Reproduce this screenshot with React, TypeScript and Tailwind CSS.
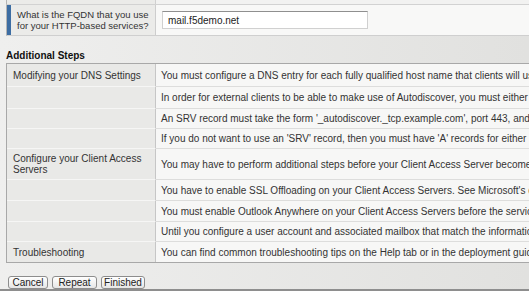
import React from 'react';

// rows of the "Additional Steps" table; text runs past the right edge and gets clipped
const STEPS = [
  { label: 'Modifying your DNS Settings', text: 'You must configure a DNS entry for each fully qualified host name that clients will use to access the service.', h: 'h-[22px]' },
  { label: '', text: 'In order for external clients to be able to make use of Autodiscover, you must either create an SRV record or an A record.', h: 'h-[22px]' },
  { label: '', text: "An SRV record must take the form '_autodiscover._tcp.example.com', port 443, and must point to the virtual server.", h: 'h-[20px]' },
  { label: '', text: "If you do not want to use an 'SRV' record, then you must have 'A' records for either 'autodiscover.example.com'.", h: 'h-[20px]' },
  { label: 'Configure your Client Access Servers', text: 'You may have to perform additional steps before your Client Access Server become available to clients.', h: 'h-[31px]' },
  { label: '', text: "You have to enable SSL Offloading on your Client Access Servers. See Microsoft's documentation for details.", h: 'h-[21px]' },
  { label: '', text: 'You must enable Outlook Anywhere on your Client Access Servers before the service will be available.', h: 'h-[21px]' },
  { label: '', text: 'Until you configure a user account and associated mailbox that match the information you entered, monitors fail.', h: 'h-[20px]' },
  { label: 'Troubleshooting', text: 'You can find common troubleshooting tips on the Help tab or in the deployment guide.', h: 'h-[21px]' },
];

const BUTTONS = [
  { label: 'Cancel', w: 'w-[40px]' },
  { label: 'Repeat', w: 'w-[45px]' },
  { label: 'Finished', w: 'w-[44px]' },
];

const App: React.FC = () => {
  return (
    <div className="w-[529px] h-[291px] overflow-hidden flex flex-col bg-linear-to-r from-[#efefee] to-[#e1e1df] font-['Liberation_Sans',Arial,sans-serif] text-[10px] leading-[11px] text-[#222]">
      {/* bottom of the previous form row */}
      <div className="h-[5px] shrink-0 flex ml-[6px] border-l border-b border-l-[#b4b4b4] border-b-[#d2d2d2]">
        <div className="w-[149px] bg-[#ebebe9] border-r border-[#d0d0d0]" />
        <div className="flex-1 bg-[#f2f2f1]" />
      </div>

      {/* FQDN question */}
      <div className="h-[31px] shrink-0 flex ml-[6px] border-l border-b border-l-[#b4b4b4] border-b-[#cfcfcf]">
        <div className="w-[149px] flex items-center bg-[#ebebe9] border-l-4 border-l-[#3d6da3] border-r border-r-[#cdcdcd] pl-[6px] whitespace-nowrap text-[9.5px] text-[#333]">
          <span>
            What is the FQDN that you use
            <br />
            for your HTTP-based services?
          </span>
        </div>
        <div className="flex-1 bg-[#f8f8f7] pl-[6px] pt-[6px]">
          <div className="w-[206px] h-[18px] flex items-center bg-white border border-[#d0d0d0] border-t-[#8f8f8f] pl-[5px]">
            mail.f5demo.net
          </div>
        </div>
      </div>

      <div className="h-[27px] shrink-0 flex items-end pl-[6px] pb-[2px] font-bold text-[#111]">
        Additional Steps
      </div>

      {/* steps table */}
      <div className="ml-[6px] shrink-0 border-t border-l border-b border-[#a8a8a8]">
        {STEPS.map((row, i) => (
          <div key={i} className={`${row.h} flex`}>
            <div
              className={`w-[149px] shrink-0 flex items-center bg-[#e9e9e7] border-r border-[#c6c6c6] pl-[6px] pr-[2px] text-[#333] ${i > 0 ? 'border-t border-t-[#f6f6f5]' : ''}`}
            >
              {row.label}
            </div>
            <div
              className={`flex-1 flex items-center bg-[#f7f7f6] pl-[5px] whitespace-nowrap overflow-hidden text-[#333] ${i > 0 ? 'border-t border-t-[#dddddc]' : ''}`}
            >
              {row.text}
            </div>
          </div>
        ))}
      </div>

      <div className="flex gap-[4px] pl-[8px] pt-[13px]">
        {BUTTONS.map((b) => (
          <button
            key={b.label}
            type="button"
            className={`${b.w} h-[13px] leading-[11px] text-center rounded-[3px] border border-[#8d8d8d] bg-linear-to-b from-white to-[#e6e6e6] text-[#222] text-[10px]`}
          >
            {b.label}
          </button>
        ))}
      </div>

      <div className="mt-auto h-[3px] bg-[#8e8e8e]" />
    </div>
  );
};

export default App;
